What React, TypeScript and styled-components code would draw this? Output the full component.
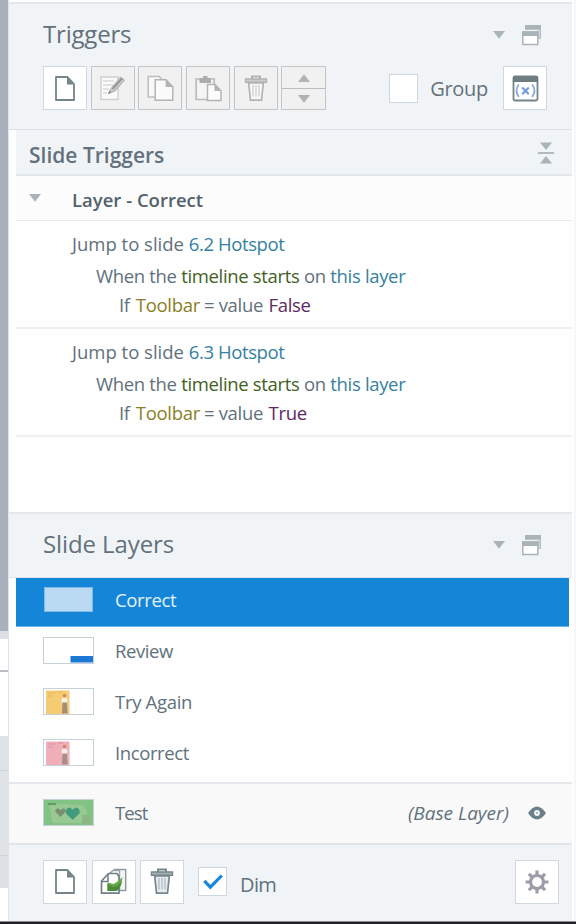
import React from 'react';
import styled, { createGlobalStyle, css } from 'styled-components';

const GlobalStyle = createGlobalStyle`
  *, *::before, *::after { box-sizing: border-box; }
  body {
    margin: 0;
    background: #fefefe;
    font-family: "Open Sans", "Noto Sans", sans-serif;
    color: #62717c;
  }
`;

const Screen = styled.div`
  display: grid;
  grid-template-columns: 8px 564px 4px;
  grid-template-rows: 921px 3px;
  width: 576px;
  height: 924px;
  overflow: hidden;
`;

const Gutter = styled.div`
  display: flex;
  flex-direction: column;
  background: #fff;
`;

const GutterPart = styled.div<{ $h: number; $bg: string }>`
  flex: none;
  height: ${(p) => p.$h}px;
  background: ${(p) => p.$bg};
`;

const Panel = styled.main`
  display: flex;
  flex-direction: column;
  border-left: 1px solid #e0e4e9;
  padding-top: 2px;
  background: #fefefe;
`;

const RightEdge = styled.div`
  border-right: 2px solid #f7f7f8;
  background: #fff;
`;

const WindowEdge = styled.div`
  grid-column: 1 / -1;
  border-top: 1px solid #8c8b90;
  background: #211d29;
`;

const TriggersHead = styled.header`
  display: flex;
  flex-direction: column;
  height: 128px;
  border-top: 2px solid #e1e7eb;
  border-bottom: 1px solid #dbe1e6;
  background: #f0f4f7;
`;

const LayersHead = styled.header`
  height: 66px;
  border-top: 2px solid #e4e8eb;
  border-bottom: 1px solid #dfe4e8;
  background: #f0f4f7;
`;

const TitleRow = styled.div`
  display: flex;
  align-items: center;
  height: 61px;
  padding: 0 30px 0 34px;
`;

const Title = styled.h1<{ $spacing: number }>`
  flex: 1;
  margin: 0;
  padding-bottom: 2px;
  font-size: 24px;
  font-weight: 400;
  line-height: 59px;
  letter-spacing: ${(p) => p.$spacing}px;
`;

const TitleIcons = styled.div`
  display: flex;
  align-items: center;
  gap: 16px;
`;

const Tools = styled.div`
  display: flex;
  align-items: center;
  padding: 1px 25px 0 34px;
`;

const ButtonGroup = styled.div`
  display: flex;
  gap: 3.7px;
`;

const IconButton = styled.button<{ $disabled?: boolean }>`
  display: grid;
  place-items: center;
  flex: none;
  width: 44px;
  height: 44px;
  margin: 0;
  padding: 0;
  border: 1px solid #cfd8df;
  background: #fff;
  ${(p) => p.$disabled && css`
    border-color: #c3c5c6;
    background: #f1f1f1;
  `}
`;

const Stepper = styled.div`
  display: grid;
  grid-template-rows: 1fr 1fr;
  width: 45px;
  height: 44px;
  border: 1px solid #c3c5c6;
  background: #f1f1f1;
`;

const Step = styled.div`
  display: grid;
  place-items: center;
  & + & { border-top: 1px solid #bbbdbe; }
`;

const CheckField = styled.label<{ $gap: number; $size: number }>`
  display: flex;
  align-items: center;
  gap: ${(p) => p.$gap}px;
  font-size: ${(p) => p.$size}px;
`;

const GroupField = styled(CheckField)`
  margin: 0 15px 0 auto;
  letter-spacing: -0.3px;
`;

const DimField = styled(CheckField)`
  margin: 0 auto 0 14px;
  letter-spacing: -0.6px;
`;

const FieldText = styled.span<{ $drop?: number }>`
  padding-top: ${(p) => p.$drop ?? 0}px;
`;

const CheckBox = styled.span`
  display: grid;
  place-items: center;
  width: 29px;
  height: 29px;
  border: 1px solid #ccd6dd;
  background: #fff;
`;

const SectionBar = styled.div`
  display: flex;
  align-items: center;
  justify-content: space-between;
  height: 46px;
  margin-left: 7px;
  padding: 1px 18px 0 13px;
  border-bottom: 2px solid #e0e6ea;
  background: #f0f4f7;
`;

const SectionTitle = styled.h2`
  margin: 0;
  padding-top: 4px;
  font-size: 21px;
  font-weight: 600;
  line-height: 40px;
`;

const GroupBar = styled.div`
  display: flex;
  align-items: center;
  height: 45px;
  margin-left: 7px;
  padding-left: 13px;
  border-bottom: 1px solid #e8eaeb;
  background: #fcfcfc;
`;

const GroupName = styled.h3`
  margin: 0 0 0 31px;
  padding-top: 2px;
  font-size: 18.5px;
  font-weight: 600;
  color: #53616b;
`;

const Trigger = styled.div`
  height: 108px;
  margin-left: 7px;
  padding: 8px 0 0 55px;
  border-bottom: 2px solid #f0f0f1;
  font-size: 18.5px;
  white-space: pre;
`;

const Action = styled.div`
  padding-left: 1px;
  line-height: 30px;
`;

const Event = styled.div`
  padding-left: 25px;
  line-height: 34px;
  letter-spacing: -0.33px;
`;

const Condition = styled.div`
  padding-left: 48px;
  line-height: 24px;
  letter-spacing: -0.31px;
`;

const Link = styled.span`color: #35819f;`;
const SlideLink = styled(Link)`letter-spacing: -0.4px;`;
const EventName = styled.span`color: #43611e;`;
const Variable = styled.span`
  margin: 0 -0.5px 0 1.5px;
  color: #8b7f26;
`;
const Value = styled.span`
  margin-left: 1px;
  color: #5b2a62;
`;

const Spacer = styled.div`
  flex: 1;
`;

const Layers = styled.div`
  height: 204px;
`;

const LayerRow = styled.div<{ $selected?: boolean }>`
  display: flex;
  align-items: center;
  height: 51px;
  margin-left: 7px;
  padding: 0 0 5px 27px;
  ${(p) => p.$selected && css`
    height: 49px;
    margin-right: 3px;
    border-bottom: 1px solid #6eb3e8;
    background: #1585d8;
    color: #e4f2fc;
  `}
`;

const Thumb = styled.div<{ $bare?: boolean }>`
  width: 51px;
  height: 27px;
  border: 1px solid #c5d0d7;
  background: #fff;
  ${(p) => p.$bare && css`
    width: 49px;
    height: 25px;
    margin: 0 1px;
    border-color: #7fbae9;
    background: #b9d9f3;
  `}
  svg { display: block; }
`;

const LayerName = styled.span<{ $spacing: number }>`
  margin-left: 21px;
  font-size: 18.5px;
  letter-spacing: ${(p) => p.$spacing}px;
`;

const BaseRow = styled.div`
  display: flex;
  align-items: center;
  height: 61px;
  padding: 0 26px 2px 34px;
  border-top: 2px solid #e4e8ec;
  background: #f9f9f9;
`;

const BaseNote = styled.em`
  margin: 0 19px 0 auto;
  font-size: 19px;
`;

const Footer = styled.footer`
  display: flex;
  align-items: center;
  height: 78px;
  padding: 0 13px 3px 34px;
  border-top: 2px solid #e2e5e7;
  background: #f0f4f7;
`;

const FooterButtons = styled(ButtonGroup)`
  gap: 4.5px;
`;

const Down = ({ color = '#a9b3b8' }: { color?: string }) => (
  <svg width="12" height="8" viewBox="0 0 12 8"><path d="M0 0h12L6 7.8z" fill={color} /></svg>
);
const Up = () => (
  <svg width="12" height="8" viewBox="0 0 12 8"><path d="M0 8h12L6 .2z" fill="#b0b2b3" /></svg>
);

const Restore = () => (
  <svg width="21" height="22" viewBox="0 0 21 22">
    <path d="M4 1h16v14h-3V6H4z" fill="#cdd4d8" />
    <path d="M4 1h16v4.5H4z" fill="#a9b4b9" />
    <path d="M19.5 5v9.5H17" fill="none" stroke="#b4bec3" />
    <path d="M1.8 8h15v12.4h-15z" fill="#fff" stroke="#a9b4b9" strokeWidth="1.5" />
    <path d="M1 7.3h16.5V12H1z" fill="#a9b4b9" />
  </svg>
);

const Collapse = () => (
  <svg width="16" height="22" viewBox="0 0 16 22">
    <path d="M2 .5h12L8 8zM2 21.5h12L8 14z" fill="#a9b4b8" />
    <path d="M0 11h16" stroke="#a9b4b8" strokeWidth="1.8" />
  </svg>
);

const NewPage = () => (
  <svg width="22" height="27" viewBox="0 0 22 27">
    <path d="M2 2h11.5l6.5 7v16H2z" fill="#fff" stroke="#748488" strokeWidth="1.8" strokeLinejoin="round" />
    <path d="M13 2.2v7.3h6.8z" fill="#748488" />
  </svg>
);

const Edit = () => (
  <svg width="27" height="27" viewBox="0 0 27 27">
    <path d="M2 2h17v22.5H2z" fill="#fafafa" stroke="#cfcfcf" strokeWidth="1.4" />
    <path d="M4 6h11M4 10h10M4 14h6M4 18h4" stroke="#dadada" strokeWidth="1.4" />
    <path d="M9.500 18.500l2.500-5L21.500 2l4 3L16 16z" fill="#c9c9c9" stroke="#a7a9aa" strokeLinejoin="round" />
    <path d="M13.500 14L23 3.500" stroke="#8b8d8f" strokeWidth="1.600" />
    <path d="M9 19l1.400-3.200 2 1.600z" fill="#888" />
  </svg>
);

const Copy = () => (
  <svg width="27" height="27" viewBox="0 0 27 27">
    <path d="M1.2 1.500h11l4 4V22h-15z" fill="#f8f8f8" stroke="#bbbdbe" strokeWidth="1.500" />
    <path d="M8.200 4.700H19l6.800 7v13.500H8.200z" fill="#fafafa" stroke="#b2b4b5" strokeWidth="1.500" />
    <path d="M18.600 4.500v7.600h7z" fill="#b2b4b5" />
  </svg>
);

const Paste = () => (
  <svg width="27" height="27" viewBox="0 0 27 27">
    <path d="M1.2 4h18v20.500h-18z" fill="#f5f5f5" stroke="#b9bbbc" strokeWidth="1.700" />
    <path d="M4.500 3H8V1h4.500v2H16v5H4.500z" fill="#aaacad" />
    <path d="M12.500 9.500h7.500l6 6.300v9.700H12.500z" fill="#fcfcfc" stroke="#b2b4b5" strokeWidth="1.500" />
    <path d="M19.500 9.500V16H26z" fill="#b2b4b5" />
  </svg>
);

const Trash = ({ muted }: { muted?: boolean }) => {
  const line = muted ? '#b1b3b4' : '#76868b';
  return (
    <svg width="24" height="27" viewBox="0 0 24 27">
      <path d="M8 4V1.500h8V4" fill="none" stroke={line} strokeWidth="2" />
      <path d="M4.700 8h14.600L17.500 25.200h-11z" fill={muted ? '#f8f8f8' : '#e5ecf1'} stroke={line} strokeWidth="1.700" />
      <path d="M1.500 4h21v3.200h-21z" fill={muted ? '#c9cbcc' : '#a6b2b7'} stroke={line} strokeWidth="1.400" />
      <path d="M9 10v11.500M12 10v11.500M15 10v11.500" stroke={muted ? '#d2d2d2' : '#b4c0c7'} strokeWidth="1.400" />
    </svg>
  );
};

const Variables = () => (
  <svg width="27" height="27" viewBox="0 0 27 27">
    <rect x="1.500" y="1.500" width="24" height="24" rx="1.500" fill="#fff" stroke="#748488" strokeWidth="1.800" />
    <path d="M1 1.500h25V7H1z" fill="#6d7d80" />
    <path d="M6.800 9.500Q2.300 15.500 6.800 22M20.200 9.500q4.500 6 0 12.500" fill="none" stroke="#8fabdf" strokeWidth="1.900" />
    <path d="M10.200 12.500l6.600 6.800M16.800 12.500l-6.600 6.800" stroke="#799bdc" strokeWidth="2.200" />
  </svg>
);

const Duplicate = () => (
  <svg width="27" height="27" viewBox="0 0 27 27">
    <path d="M14.500 5.500v-4h11.200V22.500H19" fill="#f4f6f6" stroke="#8f9c9f" strokeWidth="1.500" />
    <path d="M8 7l5-4.500h6.500V22" fill="#fff" stroke="#98a4a7" strokeWidth="1.400" />
    <path d="M1.500 25.200V13L8.500 5.500H17l2 3v16.700z" fill="#fff" stroke="#708085" strokeWidth="1.700" strokeLinejoin="round" />
    <path d="M1.500 13.500h6.500V6" fill="none" stroke="#708085" strokeWidth="1.500" />
    <path d="M7.500 14.500l6 1.500q5-2 9-7-1 9-4.500 13L7.500 23z" fill="#65a94a" />
    <path d="M7.500 15.500V23H17q4-4 5-10-4 5.500-9 6z" fill="#4c8c37" />
  </svg>
);

const Check = () => (
  <svg width="20" height="16" viewBox="0 0 20 16">
    <path d="M1.300 6.800l6 6.400L18.800 1.500" fill="none" stroke="#1687dc" strokeWidth="3.200" />
  </svg>
);

const Gear = () => (
  <svg width="24" height="24" viewBox="0 0 24 24">
    <circle cx="12" cy="12" r="6.500" fill="#fff" stroke="#9d9da8" strokeWidth="3.200" />
    <g stroke="#9d9da8" strokeWidth="3.200">
      <path d="M12 .5v5M12 18.500v5M.5 12h5M18.500 12h5M3.900 3.900l3.500 3.500M16.600 16.600l3.500 3.500M20.100 3.900l-3.500 3.500M7.400 16.600l-3.500 3.500" />
    </g>
  </svg>
);

const Eye = () => (
  <svg width="18" height="14" viewBox="0 0 18 14">
    <path d="M0 7Q4.500 .5 9 .5T18 7q-4.500 6.500-9 6.500T0 7z" fill="#6b7f88" />
    <circle cx="9" cy="7" r="2.900" fill="#f4f6f6" />
    <circle cx="9" cy="7" r="1" fill="#9aa9af" />
  </svg>
);

const ReviewArt = () => (
  <svg width="49" height="25"><path d="M26.500 18H49v6.500H26.500z" fill="#1b78d4" /></svg>
);

const PersonArt = ({ tone, mark, shade }: { tone: string; mark: string; shade: string }) => (
  <svg width="49" height="25" viewBox="0 0 49 25">
    <path d="M2 1.500h23.500V25H2z" fill={tone} />
    <path d="M4 4h8M14 3h5M4 7h5" stroke={mark} strokeWidth="1" opacity=".7" />
    <circle cx="20.500" cy="6.500" r="1.800" fill="#c98f62" />
    <path d="M17.500 10q3-2.500 6 0l-.5 4.500h-5z" fill="#f5efe9" />
    <path d="M18.500 13.500h4.500l.7 11h-5.700z" fill={shade} />
  </svg>
);

const BaseArt = () => (
  <svg width="49" height="25" viewBox="0 0 49 25">
    <path d="M0 0h49v25H0z" fill="#82c383" />
    <path d="M5 6l8-2 25 1 5 5v13H9z" fill="#98c993" />
    <path d="M4 4h8" stroke="#50895d" strokeWidth="1.400" />
    <path d="M38 15h8v9h-8z" fill="#8bb785" />
    <path d="M16.500 17l-5-5q-.5-4 3-3.500l2 1.700 2-1.700q3.500-.5 3 3.500z" fill="#7a8e72" />
    <path d="M28.500 20l-6.500-6.500q-1-6 4-6l2.500 2 3-2q5 0 4 6z" fill="#429c7c" />
  </svg>
);

const triggers = [
  { slide: '6.2 Hotspot', value: 'False' },
  { slide: '6.3 Hotspot', value: 'True' },
];

const layers = [
  { name: 'Correct', spacing: -0.35, selected: true, art: null },
  { name: 'Review', spacing: -0.4, selected: false, art: <ReviewArt /> },
  { name: 'Try Again', spacing: -0.3, selected: false, art: <PersonArt tone="#f6cc72" mark="#dfa95b" shade="#a38e78" /> },
  { name: 'Incorrect', spacing: -0.4, selected: false, art: <PersonArt tone="#f0aeb9" mark="#ce8798" shade="#a98f89" /> },
];

const gutterParts: [number, string][] = [
  [631, '#a8b1bb'], [8, '#dce0e6'], [31, '#fff'], [2, '#b9bec7'], [64, '#fff'],
  [34, '#dfe3e6'], [1, '#cdd2d6'], [84, '#dfe3e6'], [1, '#cdd2d6'], [32, '#dde1e5'],
];

export default function App() {
  return (
    <Screen>
      <GlobalStyle />
      <Gutter>
        {gutterParts.map(([h, bg], i) => <GutterPart key={i} $h={h} $bg={bg} />)}
      </Gutter>
      <Panel>
        <TriggersHead>
          <TitleRow>
            <Title $spacing={-0.2}>Triggers</Title>
            <TitleIcons><Down /><Restore /></TitleIcons>
          </TitleRow>
          <Tools>
            <ButtonGroup>
              <IconButton aria-label="New trigger"><NewPage /></IconButton>
              <IconButton $disabled aria-label="Edit"><Edit /></IconButton>
              <IconButton $disabled aria-label="Copy"><Copy /></IconButton>
              <IconButton $disabled aria-label="Paste"><Paste /></IconButton>
              <IconButton $disabled aria-label="Delete"><Trash muted /></IconButton>
              <Stepper><Step><Up /></Step><Step><Down color="#b0b2b3" /></Step></Stepper>
            </ButtonGroup>
            <GroupField $gap={12.5} $size={20}>
              <CheckBox /><FieldText>Group</FieldText>
            </GroupField>
            <IconButton aria-label="Variables"><Variables /></IconButton>
          </Tools>
        </TriggersHead>

        <SectionBar>
          <SectionTitle>Slide Triggers</SectionTitle>
          <Collapse />
        </SectionBar>
        <GroupBar>
          <Down />
          <GroupName>Layer - Correct</GroupName>
        </GroupBar>
        {triggers.map((t) => (
          <Trigger key={t.slide}>
            <Action>Jump to slide <SlideLink>{t.slide}</SlideLink></Action>
            <Event>When the <EventName>timeline starts</EventName> on <Link>this layer</Link></Event>
            <Condition>If <Variable>Toolbar</Variable> = value <Value>{t.value}</Value></Condition>
          </Trigger>
        ))}
        <Spacer />

        <LayersHead>
          <TitleRow>
            <Title $spacing={-0.1}>Slide Layers</Title>
            <TitleIcons><Down /><Restore /></TitleIcons>
          </TitleRow>
        </LayersHead>
        <Layers>
          {layers.map((l) => (
            <LayerRow key={l.name} $selected={l.selected}>
              <Thumb $bare={l.selected}>{l.art}</Thumb>
              <LayerName $spacing={l.spacing}>{l.name}</LayerName>
            </LayerRow>
          ))}
        </Layers>
        <BaseRow>
          <Thumb><BaseArt /></Thumb>
          <LayerName $spacing={-0.9}>Test</LayerName>
          <BaseNote>(Base Layer)</BaseNote>
          <Eye />
        </BaseRow>
        <Footer>
          <FooterButtons>
            <IconButton aria-label="New layer"><NewPage /></IconButton>
            <IconButton aria-label="Duplicate layer"><Duplicate /></IconButton>
            <IconButton aria-label="Delete layer"><Trash /></IconButton>
          </FooterButtons>
          <DimField $gap={13} $size={20}>
            <CheckBox><Check /></CheckBox><FieldText $drop={6}>Dim</FieldText>
          </DimField>
          <IconButton aria-label="Layer settings"><Gear /></IconButton>
        </Footer>
      </Panel>
      <RightEdge />
      <WindowEdge />
    </Screen>
  );
}
